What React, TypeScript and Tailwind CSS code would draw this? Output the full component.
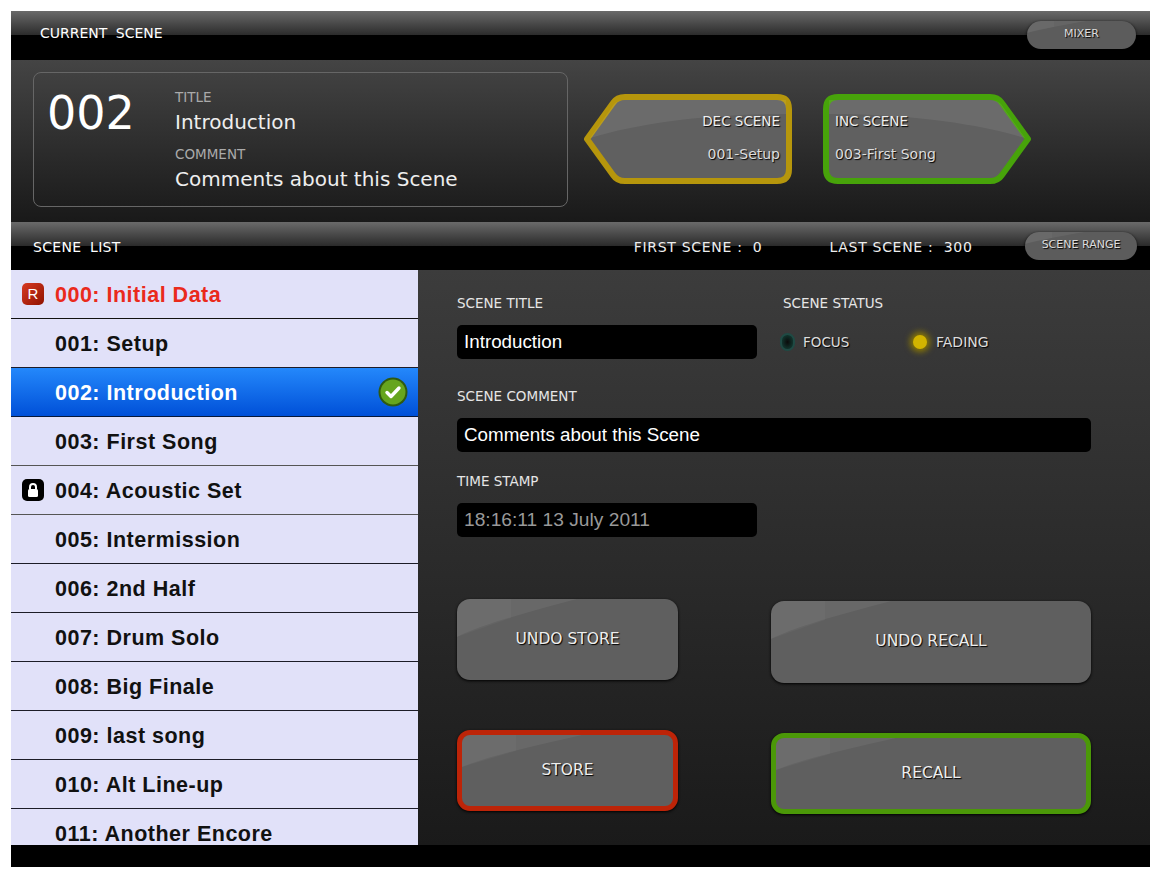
import React from "react";

const dv = "font-['DejaVu_Sans',sans-serif]";
const shadow = "[text-shadow:1px_1px_1px_#000]";

function Gloss({ w = 120, h = 30 }: { w?: number; h?: number }) {
  return (
    <svg className="absolute left-0 top-0 pointer-events-none" width={w} height={h} viewBox={`0 0 ${w} ${h}`}>
      <path d={`M0 0H${w}C${w * 0.65} ${h * 0.3} ${w * 0.25} ${h * 0.62} 0 ${h}Z`} fill="#fff" opacity="0.06" />
      <path d={`M0 0H${w * 0.45}V${h * 0.5}L0 ${h}Z`} fill="#fff" opacity="0.03" />
    </svg>
  );
}

function Big({ label, border, className }: { label: string; border?: string; className: string }) {
  return (
    <div
      className={`relative flex items-center justify-center overflow-hidden rounded-[13px] bg-[#5f5f5f] shadow-[0_1px_3px_#000] ${border ?? ""} ${className}`}
    >
      <Gloss w={120} h={border ? 32 : 38} />
      <span className={`relative text-[15.5px] text-[#eee] ${dv} ${shadow}`}>{label}</span>
    </div>
  );
}

function Arrow({ dir, color, top, bottom }: { dir: "l" | "r"; color: string; top: string; bottom: string }) {
  const left = dir === "l";
  const path = left
    ? "M4 45 L30 9 Q34 3 42 3 H194 Q206 3 206 15 V75 Q206 87 194 87 H42 Q34 87 30 81 Z"
    : "M205 45 L179 9 Q175 3 167 3 H15 Q3 3 3 15 V75 Q3 87 15 87 H167 Q175 87 179 81 Z";
  const gloss = left
    ? "M7 44 L31 10 Q35 6 42 6 H203 V20 C130 20 60 28 7 44Z"
    : "M202 44 L178 10 Q174 6 167 6 H6 V20 C79 20 149 28 202 44Z";
  return (
    <div className={`relative flex h-[90px] w-[209px] flex-col justify-center gap-[15px] pb-[3px] ${left ? "items-end pr-[12px]" : "items-start pl-[12px]"}`}>
      <svg className="absolute inset-0" width="209" height="90" viewBox="0 0 209 90">
        <path d={path} fill="#606060" stroke={color} strokeWidth="6" strokeLinejoin="round" />
        <path d={gloss} fill="#fff" opacity="0.07" />
      </svg>
      <span className={`relative text-[13.5px] leading-[18px] text-[#eee] ${dv} ${shadow}`}>{top}</span>
      <span className={`relative text-[14px] leading-[18px] text-[#ddd] ${dv} ${shadow}`}>{bottom}</span>
    </div>
  );
}

function Bar({ h, children }: { h: string; children: React.ReactNode }) {
  return (
    <div className={`flex items-center bg-[linear-gradient(#6a6a6a_0%,#2a2a2a_50%,#000_50%,#000_100%)] ${h}`}>{children}</div>
  );
}

function Pill({ label, className }: { label: string; className: string }) {
  return (
    <div className={`relative flex h-[28px] items-center justify-center overflow-hidden rounded-full bg-[#5c5c5c] shadow-[0_1px_3px_#000] ${className}`}>
      <Gloss w={60} h={12} />
      <span className={`relative text-[11px] text-[#ddd] ${dv} ${shadow}`}>{label}</span>
    </div>
  );
}

const rows = [
  "000: Initial Data",
  "001: Setup",
  "002: Introduction",
  "003: First Song",
  "004: Acoustic Set",
  "005: Intermission",
  "006: 2nd Half",
  "007: Drum Solo",
  "008: Big Finale",
  "009: last song",
  "010: Alt Line-up",
  "011: Another Encore",
];

function Row({ text, i }: { text: string; i: number }) {
  const selected = i === 2;
  const red = i === 0;
  return (
    <div
      className={`flex h-[49px] shrink-0 items-center border-b pl-[11px] pr-[10px] font-['Liberation_Sans',sans-serif] text-[21.5px] font-bold tracking-[0.5px] ${
        selected
          ? "border-[#06183a] bg-[linear-gradient(#2488fb,#0050d8)] text-white"
          : red
            ? "border-[#111] bg-[#e1e1f9] text-[#ea2a1c]"
            : i > 2 && i < 5
              ? "border-[#555] bg-[#e1e1f9] text-[#111]"
              : "border-[#1c1c28] bg-[#e1e1f9] text-[#111]"
      }`}
    >
      <span className="flex w-[33px] shrink-0 items-center">
        {red && (
          <span className="flex h-[22px] w-[22px] items-center justify-center rounded-[5px] bg-[linear-gradient(135deg,#d83a22,#8f1200)] font-['Liberation_Sans',sans-serif] text-[15px] font-normal tracking-normal text-white">
            R
          </span>
        )}
        {i === 4 && (
          <span className="flex h-[22px] w-[22px] items-center justify-center rounded-[5px] bg-black">
            <svg width="14" height="16" viewBox="0 0 14 16">
              <path d="M4 7V5a3 3 0 0 1 6 0v2" fill="none" stroke="#fff" strokeWidth="2" />
              <rect x="2" y="7" width="10" height="8" rx="1.5" fill="#fff" />
            </svg>
          </span>
        )}
      </span>
      <span className="grow pt-[2px]">{text}</span>
      {selected && (
        <svg width="30" height="30" viewBox="0 0 30 30">
          <circle cx="15" cy="15" r="14.5" fill="#2f5a10" />
          <circle cx="15" cy="15" r="12.5" fill="#66a51e" />
          <path d="M9 15.5l4 4 8-8.5" fill="none" stroke="#fff" strokeWidth="3.4" strokeLinecap="round" strokeLinejoin="round" />
        </svg>
      )}
    </div>
  );
}

const label = `text-[13.5px] leading-[16px] text-[#e6e6e6] ${dv}`;
const field = "flex h-[34px] items-center rounded-[5px] bg-black px-[7px] font-['Liberation_Sans',sans-serif] text-[18.8px]";

export default function App() {
  return (
    <div className="min-h-[870px] bg-white pl-[11px] pr-[6px] pt-[11px]">
      <div className="overflow-hidden">
        <Bar h="h-[49px]">
          <span className={`ml-[29px] mt-[-4px] text-[14px] text-white [word-spacing:4px] ${dv}`}>CURRENT SCENE</span>
          <Pill label="MIXER" className="ml-auto mr-[14px] mt-[-2px] w-[109px]" />
        </Bar>

        <div className="flex h-[162px] items-start bg-[linear-gradient(#444,#191919)] pl-[22px] pt-[12px]">
          <div className="flex h-[135px] w-[535px] rounded-[8px] border border-[#666] pl-[13px]">
            <span className={`mt-[14px] w-[128px] text-[46px] leading-[52px] text-white ${dv}`}>002</span>
            <div className={`flex flex-col ${dv}`}>
              <span className="mt-[16px] text-[13.5px] leading-[16px] text-[#aaa]">TITLE</span>
              <span className="mt-[5px] text-[20px] leading-[24px] text-[#eee]">Introduction</span>
              <span className="mt-[12px] text-[13.5px] leading-[16px] text-[#aaa]">COMMENT</span>
              <span className="mt-[5px] text-[20px] leading-[24px] text-[#eee]">Comments about this Scene</span>
            </div>
          </div>
          <div className="ml-[15px] mt-[22px] flex gap-[31px]">
            <Arrow dir="l" color="#b6960c" top="DEC SCENE" bottom="001-Setup" />
            <Arrow dir="r" color="#47a30a" top="INC SCENE" bottom="003-First Song" />
          </div>
        </div>

        <Bar h="h-[48px]">
          <span className={`ml-[22px] mt-[2px] text-[14px] tracking-[0.3px] text-white [word-spacing:4px] ${dv}`}>SCENE LIST</span>
          <span className={`ml-[513px] mt-[2px] whitespace-pre text-[14px] tracking-[0.7px] text-[#eee] ${dv}`}>FIRST SCENE :  0</span>
          <span className={`ml-[67px] mt-[2px] whitespace-pre text-[14px] tracking-[0.7px] text-[#eee] ${dv}`}>LAST SCENE :  300</span>
          <Pill label="SCENE RANGE" className="ml-auto mr-[13px] mt-[-1px] w-[112px]" />
        </Bar>

        <div className="flex h-[575px]">
          <div className="flex h-full w-[407px] shrink-0 flex-col overflow-hidden">
            {rows.map((r, i) => (
              <Row key={r} text={r} i={i} />
            ))}
          </div>
          <div className="grow bg-[linear-gradient(#3c3c3c,#1a1a1a)] pl-[39px] pr-[59px] pt-[25px]">
            <div className="flex">
              <div className="w-[300px]">
                <div className={label}>SCENE TITLE</div>
                <div className={`${field} mt-[14px] text-white`}>Introduction</div>
              </div>
              <div className="ml-[26px]">
                <div className={label}>SCENE STATUS</div>
                <div className="mt-[14px] flex h-[34px] items-center">
                  <span className="ml-[-3px] h-[18px] w-[15px] rounded-full border-2 border-[#1f4a44] bg-[radial-gradient(#0a0a0a,#14443a)]" />
                  <span className={`ml-[8px] w-[110px] text-[13.5px] text-[#ddd] ${dv} ${shadow}`}>FOCUS</span>
                  <span className="h-[14px] w-[14px] rounded-full bg-[#d2b400] shadow-[0_0_6px_3px_#8f7c00]" />
                  <span className={`ml-[9px] text-[14px] text-[#ddd] ${dv} ${shadow}`}>FADING</span>
                </div>
              </div>
            </div>
            <div className={`${label} mt-[29px]`}>SCENE COMMENT</div>
            <div className={`${field} mt-[14px] text-white`}>Comments about this Scene</div>
            <div className={`${label} mt-[21px]`}>TIME STAMP</div>
            <div className={`${field} mt-[14px] w-[300px] text-[19.2px] text-[#999]`}>18:16:11 13 July 2011</div>

            <div className="mt-[62px] flex items-start">
              <Big label="UNDO STORE" className="h-[81px] w-[221px]" />
              <Big label="UNDO RECALL" className="ml-[93px] mt-[2px] h-[82px] w-[320px]" />
            </div>
            <div className="mt-[47px] flex items-start">
              <Big label="STORE" border="border-[5px] border-[#bd2408]" className="h-[81px] w-[221px]" />
              <Big label="RECALL" border="border-[5px] border-[#4b9808]" className="ml-[93px] mt-[3px] h-[81px] w-[320px]" />
            </div>
          </div>
        </div>
        <div className="h-[22px] bg-black" />
      </div>
    </div>
  );
}
